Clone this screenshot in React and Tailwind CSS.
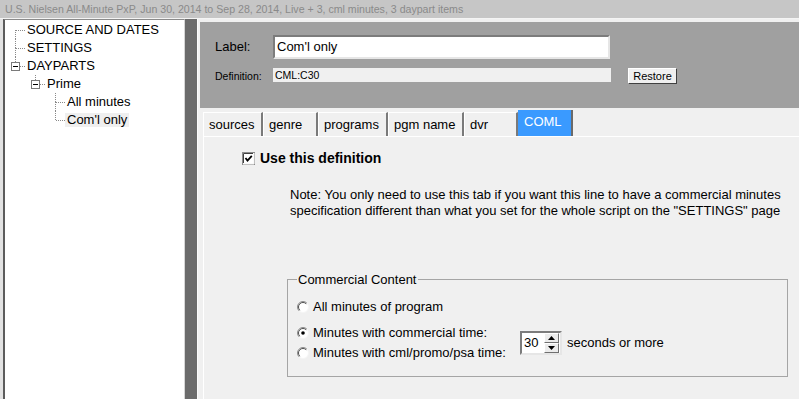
import React from 'react';

const tree = [
  { label: 'SOURCE AND DATES', cells: [{ down: true, half: true, right: true }] },
  { label: 'SETTINGS', cells: [{ up: true, down: true, right: true }] },
  { label: 'DAYPARTS', cells: [{ up: true, box: true, right: true }] },
  { label: 'Prime', cells: [{}, { up: true, box: true, right: true }] },
  { label: 'All minutes', cells: [{}, {}, { up: true, down: true, right: true }] },
  { label: "Com'l only", cells: [{}, {}, { up: true, right: true }], selected: true },
];

const tabs = [
  { name: 'sources', w: 'w-[60px]' },
  { name: 'genre', w: 'w-[55px]' },
  { name: 'programs', w: 'w-[70px]' },
  { name: 'pgm name', w: 'w-[76px]' },
  { name: 'dvr', w: 'w-[54px]' },
];

// one 20x18 column of the tree's dotted connector lines
function TreeCell({ up, down, right, box }) {
  return (
    <svg width="20" height="18" className="shrink-0">
      <g stroke="#8a8a8a" strokeDasharray="1 1">
        {up && <line x1="10.5" y1="0" x2="10.5" y2="9" />}
        {down && <line x1="10.5" y1="9" x2="10.5" y2="18" />}
        {right && <line x1="11" y1="9.5" x2="20" y2="9.5" />}
      </g>
      {box && (
        <g>
          <rect x="6.5" y="5.5" width="8" height="8" fill="#fff" stroke="#7a7a7a" />
          <line x1="8" y1="9.5" x2="13" y2="9.5" stroke="#000" />
        </g>
      )}
    </svg>
  );
}

function Radio({ checked }) {
  return (
    <svg width="12" height="12" className="shrink-0">
      <circle cx="6" cy="6" r="5.5" fill="#fff" stroke="#f4f4f4" />
      <path d="M9.9 2.1 A5.5 5.5 0 0 0 2.1 9.9" fill="none" stroke="#8c8c8c" />
      <path d="M9.2 2.8 A4.5 4.5 0 0 0 2.8 9.2" fill="none" stroke="#505050" />
      {checked && <circle cx="6" cy="6" r="1.8" fill="#000" />}
    </svg>
  );
}

function SpinHalf({ down }) {
  return (
    <div className="h-[10px] bg-[#ececec] border border-t-white border-l-white border-r-[#707070] border-b-[#707070] flex items-center justify-center">
      <svg width="7" height="4">
        <path d={down ? 'M0 0 L7 0 L3.5 4 Z' : 'M0 4 L7 4 L3.5 0 Z'} fill="#000" />
      </svg>
    </div>
  );
}

export default function App() {
  return (
    <div className="w-[799px] h-[399px] overflow-hidden flex flex-col bg-[#f0f0f0] text-black font-['Liberation_Sans',Arial,sans-serif]">
      <div className="h-[19px] shrink-0 bg-[#c6c6c6] border-b border-[#f4f4f4] pl-[5px] text-[10.6px] leading-[18px] text-[#8a8a8a] whitespace-nowrap">
        U.S. Nielsen All-Minute PxP, Jun 30, 2014 to Sep 28, 2014, Live + 3, cml minutes, 3 daypart items
      </div>

      <div className="flex flex-1 min-h-0">
        <div className="w-[185px] shrink-0 flex bg-[#e2e2e2] pl-[3px]">
          <div className="flex-1 pt-[1px] bg-white border-l-2 border-t border-l-[#5c5c5c] border-t-[#8a8a8a] border-r border-r-[#d6d6d6]">
            {tree.map((item, i) => (
              <div key={i} className="flex items-center h-[18px]">
                {item.cells.map((c, j) => (
                  <TreeCell key={j} {...c} />
                ))}
                <span className={'px-[2px] text-[13px] leading-[14px] whitespace-nowrap ' + (item.selected ? 'bg-[#efefef]' : '')}>
                  {item.label}
                </span>
              </div>
            ))}
          </div>
        </div>

        <div className="w-[12px] shrink-0 bg-[#6b6b6b]" />

        <div className="flex-1 flex flex-col border-l border-[#fafafa]">
          <div className="ml-[2px] mt-[3px] h-[86px] shrink-0 bg-[#a0a0a0] pl-[15px] pt-[13px]">
            <div className="flex items-center h-[24px]">
              <span className="w-[58px] text-[13px]">Label:</span>
              <div className="w-[337px] h-[24px] bg-white border-2 border-t-[#7c7c7c] border-l-[#7c7c7c] border-r-[#e6e6e6] border-b-[#e6e6e6] flex items-center pl-[2px] text-[13px]">
                Com'l only
              </div>
            </div>
            <div className="flex items-start mt-[9px]">
              <span className="w-[58px] text-[10.5px] leading-[16px]">Definition:</span>
              <div className="w-[338px] h-[14px] bg-[#f0f0f0] pl-[2px] text-[10.5px] leading-[14px]">CML:C30</div>
              <button className="ml-[17px] w-[49px] h-[16px] bg-[#f0f0f0] border border-t-white border-l-white border-r-[#404040] border-b-[#404040] text-[11px] leading-[13px]">
                Restore
              </button>
            </div>
          </div>

          <div className="h-[28px] shrink-0 flex items-end pl-[5px]">
            {tabs.map((t) => (
              <div key={t.name} className={t.w + ' h-[24px] flex items-center pl-[5px] border-t border-l border-t-white border-l-white border-r-2 border-r-[#7a7a7a] text-[13px] whitespace-nowrap'}>
                {t.name}
              </div>
            ))}
            <div className="w-[55px] h-[26px] pl-[6px] pt-[4px] bg-[#3a9aff] border-r-2 border-r-[#6a6a6a] text-white text-[13px] leading-[16px]">
              COML
            </div>
          </div>

          <div className="flex-1 ml-[5px] border-t border-l border-white bg-[#f0f0f0] pl-[38px] pt-[15px]">
            <div className="flex items-center h-[13px]">
              <svg width="13" height="13" className="shrink-0">
                <rect x="0.5" y="0.5" width="12" height="12" fill="#fff" stroke="#8c8c8c" />
                <path d="M1 12 L12 12 L12 1" fill="none" stroke="#f4f4f4" />
                <path d="M1.5 11 L1.5 1.5 L11 1.5" fill="none" stroke="#404040" />
                <path d="M3.5 6 L5.5 8.5 L9.8 3.8" fill="none" stroke="#000" strokeWidth="1.8" />
              </svg>
              <span className="ml-[5px] text-[14px] font-bold">Use this definition</span>
            </div>

            <p className="mt-[22px] ml-[48px] text-[13px] leading-[16px] whitespace-nowrap">
              Note: You only need to use this tab if you want this line to have a commercial minutes
              <br />
              specification different than what you set for the whole script on the "SETTINGS" page
            </p>

            <fieldset className="mt-[53px] ml-[45px] w-[501px] border border-[#a5a5a5] pl-[9px] pt-[10px] pb-[13px]">
              <legend className="px-[1px] text-[13px] leading-[15px]">Commercial Content</legend>
              <div className="flex items-center h-[20px]">
                <Radio />
                <span className="ml-[4px] text-[13px]">All minutes of program</span>
              </div>
              <div className="flex items-center mt-[6px]">
                <div className="w-[223px]">
                  <div className="flex items-center h-[20px]">
                    <Radio checked />
                    <span className="ml-[4px] text-[13px]">Minutes with commercial time:</span>
                  </div>
                  <div className="flex items-center h-[20px]">
                    <Radio />
                    <span className="ml-[4px] text-[13px]">Minutes with cml/promo/psa time:</span>
                  </div>
                </div>
                <div className="w-[42px] h-[24px] flex bg-white border-2 border-t-[#7c7c7c] border-l-[#7c7c7c] border-r-[#e6e6e6] border-b-[#e6e6e6]">
                  <span className="flex-1 pl-[2px] text-[13px] leading-[20px]">30</span>
                  <div className="w-[15px] mr-[1px]">
                    <SpinHalf />
                    <SpinHalf down />
                  </div>
                </div>
                <span className="ml-[5px] text-[13px]">seconds or more</span>
              </div>
            </fieldset>
          </div>
        </div>
      </div>
    </div>
  );
}
